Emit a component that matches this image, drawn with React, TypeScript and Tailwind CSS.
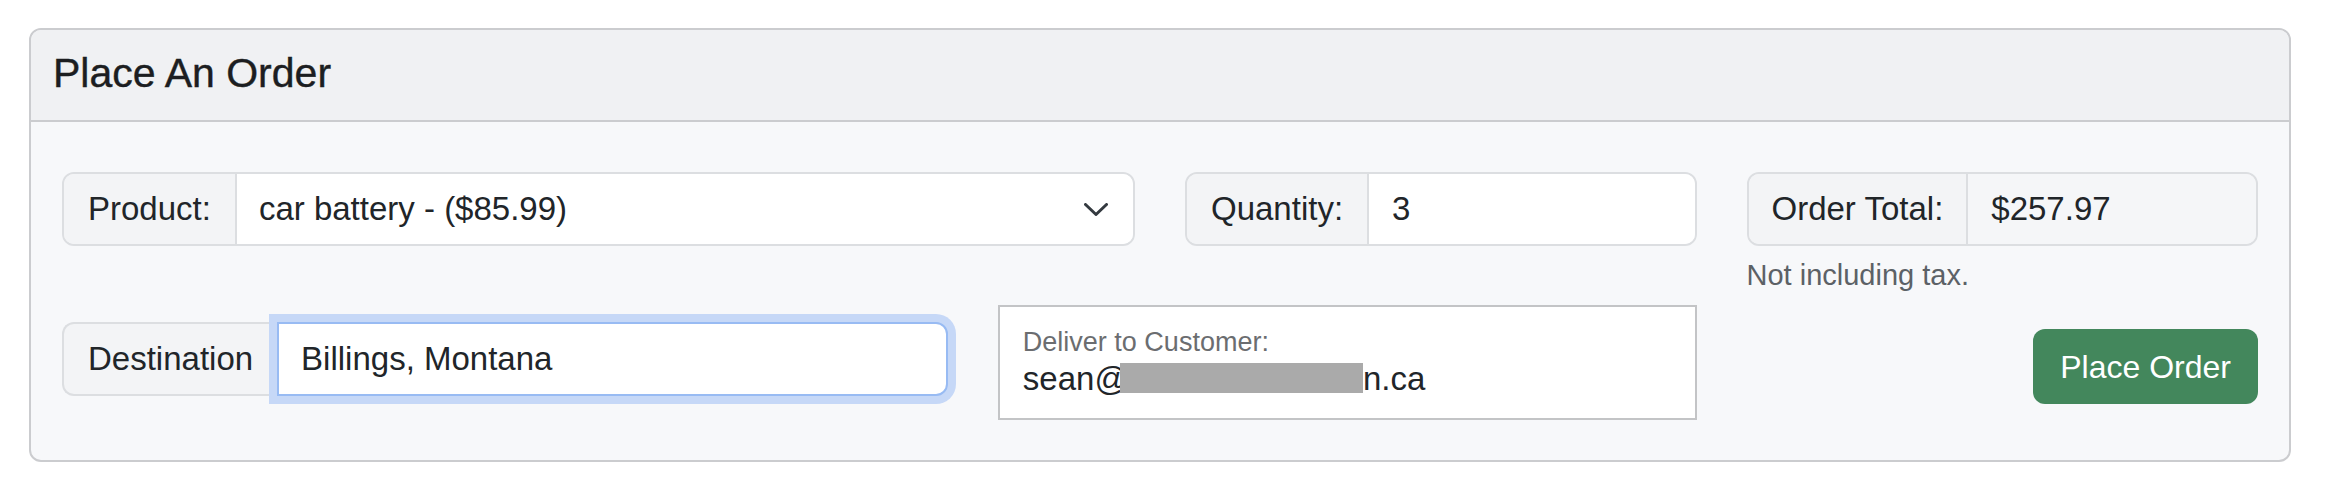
import React from "react";

function Chevron() {
  return (
    <svg width="24" height="13" viewBox="0 0 24 13" fill="none" className="shrink-0">
      <path d="M1.5 1.5 12 11.5 22.5 1.5" stroke="#343a40" strokeWidth="3" strokeLinecap="round" strokeLinejoin="round" />
    </svg>
  );
}

export default function App() {
  return (
    <div className="min-h-[496px] bg-white pt-[28px] pl-[29px] font-['Liberation_Sans',Arial,sans-serif] text-[33px] text-[#212529]">
      <div className="w-[2262px] overflow-hidden rounded-[12px] border-2 border-[#cbcccf] bg-[#f7f8fa]">
        {/* card header */}
        <div className="border-b-2 border-[#cbcccf] bg-[#f0f1f3] px-[22px] pt-[19px] pb-[23px]">
          <h4 className="text-[41px] leading-[48px] text-[#1c1e21] [-webkit-text-stroke:0.4px_#1c1e21]">Place An Order</h4>
        </div>

        <div className="px-[31px] pt-[50px] pb-[40px]">
          {/* first row */}
          <div className="grid grid-cols-12 gap-x-[50px]">
            <div className="col-span-6 flex h-[74px] overflow-hidden rounded-[12px] border-2 border-[#dcdee1]">
              <span className="flex items-center border-r-2 border-[#dcdee1] bg-[#f3f4f6] px-[24px]">Product:</span>
              <div className="flex flex-1 items-center justify-between bg-white pl-[22px] pr-[25px]">
                <span>car battery - ($85.99)</span>
                <Chevron />
              </div>
            </div>

            <div className="col-span-3 flex h-[74px] overflow-hidden rounded-[12px] border-2 border-[#dcdee1]">
              <span className="flex items-center border-r-2 border-[#dcdee1] bg-[#f3f4f6] px-[24px]">Quantity:</span>
              <div className="flex flex-1 items-center bg-white px-[23px]">3</div>
            </div>

            <div className="col-span-3">
              <div className="flex h-[74px] overflow-hidden rounded-[12px] border-2 border-[#dcdee1]">
                <span className="flex items-center border-r-2 border-[#dcdee1] bg-[#f3f4f6] px-[23px]">Order Total:</span>
                <div className="flex flex-1 items-center bg-[#f5f6f8] px-[23px]">$257.97</div>
              </div>
              <p className="mt-[9px] text-[29px] leading-[40px] text-[#5c6166]">Not including tax.</p>
            </div>
          </div>

          {/* second row */}
          <div className="mt-[10px] grid grid-cols-12 items-start gap-x-[50px]">
            <div className="col-span-5 mt-[17px] flex h-[74px]">
              <span className="flex items-center rounded-l-[12px] border-2 border-r-0 border-[#dcdee1] bg-[#f3f4f6] px-[24px]">
                Destination
              </span>
              <div className="relative z-10 flex flex-1 items-center rounded-r-[12px] border-2 border-[#98bbf3] bg-white px-[22px] shadow-[0_0_0_8px_#c6d8f7]">
                Billings, Montana
              </div>
            </div>

            <div className="col-span-4 border-2 border-[#c3c4c6] bg-white pl-[23px] pt-[20px] pb-[19px]">
              <div className="text-[27px] leading-[30px] text-[#6b6d70]">Deliver to Customer:</div>
              <div className="mt-[2px] leading-[40px]">
                sean@
                <span className="-ml-[8px] inline-block h-[30px] w-[243px] bg-[#aaaaaa] align-[-3px]" />
                n.ca
              </div>
            </div>

            <div className="col-span-3 mt-[24px] flex justify-end">
              <button className="h-[75px] rounded-[12px] bg-[#43875c] px-[27px] text-[32px] text-white">
                Place Order
              </button>
            </div>
          </div>
        </div>
      </div>
    </div>
  );
}
